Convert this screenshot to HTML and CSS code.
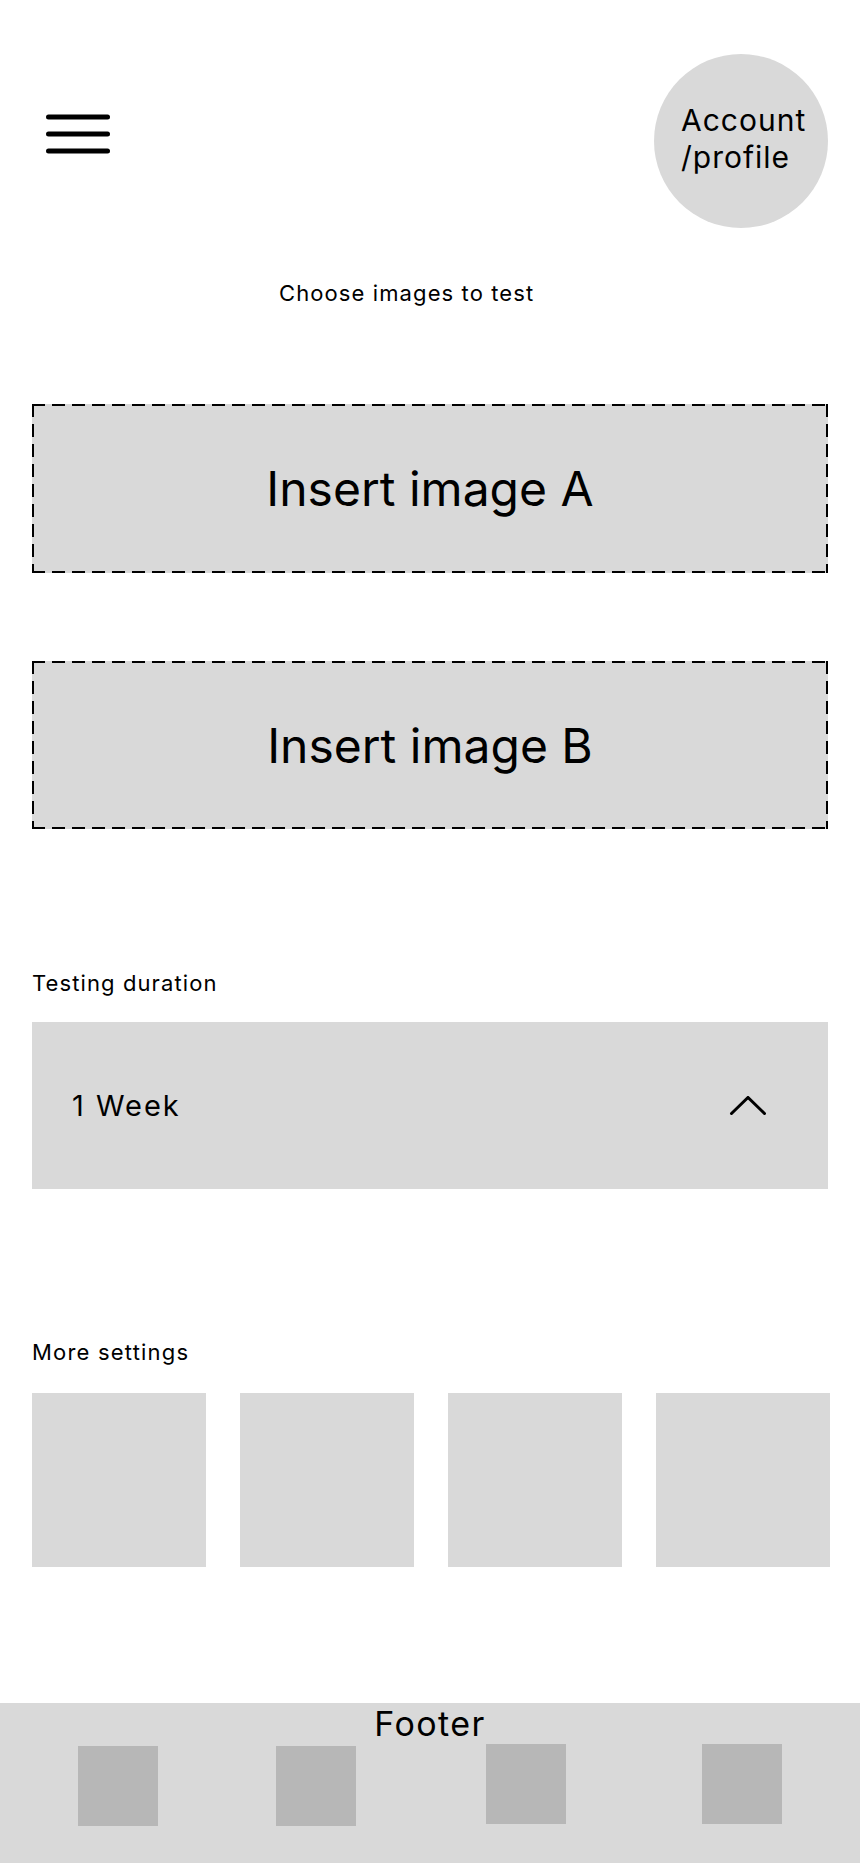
FILE: index.html
```html
<!DOCTYPE html>
<html lang="en">
<head>
    <meta charset="UTF-8">
    <meta name="viewport" content="width=device-width, initial-scale=1.0">
    <title>A/B image test</title>
    <link rel="stylesheet" href="styles.css">
</head>
<body>
    <div class="page">
        <header class="top-bar">
            <!-- menu -->
            <svg class="menu-icon" width="64" height="40" viewBox="0 0 64 40">
                <line x1="2.5" y1="3" x2="61.5" y2="3" />
                <line x1="2.5" y1="20" x2="61.5" y2="20" />
                <line x1="2.5" y1="37" x2="61.5" y2="37" />
            </svg>
            <div class="account">Account<br>/profile</div>
        </header>

        <p class="intro">Choose images to test</p>

        <div class="drop-zone">Insert image A</div>
        <div class="drop-zone second">Insert image B</div>

        <p class="label duration-label">Testing duration</p>
        <div class="select-box">
            <span>1 Week</span>
            <svg class="chevron" width="38" height="20" viewBox="0 0 38 20">
                <polyline points="2.5,17.5 19,1.5 35.5,17.5" />
            </svg>
        </div>

        <p class="label settings-label">More settings</p>
        <div class="settings">
            <div class="tile"></div>
            <div class="tile"></div>
            <div class="tile"></div>
            <div class="tile"></div>
        </div>
    </div>

    <footer class="footer">
        <div class="footer-title">Footer</div>
        <div class="footer-links">
            <div class="footer-item"></div>
            <div class="footer-item"></div>
            <div class="footer-item"></div>
            <div class="footer-item"></div>
        </div>
    </footer>
</body>
</html>
```

FILE: styles.css
```css
body {
    font-family: Inter, "Noto Sans", sans-serif;
    color: #000;
    background-color: #fff;
    margin: 0;
}
.page {
    padding: 0 32px 136px;
}
.top-bar {
    display: flex;
    justify-content: space-between;
    align-items: flex-start;
    padding-top: 54px;
}
.menu-icon {
    display: block;
    margin-top: 60px;
    margin-left: 14px;
}
.menu-icon line {
    stroke: #000;
    stroke-width: 5;
    stroke-linecap: round;
}
.account {
    width: 174px;
    height: 174px;
    box-sizing: border-box;
    border-radius: 50%;
    background-color: #d9d9d9;
    padding: 48px 0 0 27px;
    font-size: 30px;
    line-height: 37px;
    letter-spacing: 1px;
}
.intro {
    margin: 52px 0 0 247px;
    font-size: 22px;
    line-height: 27px;
    letter-spacing: 1.1px;
}
.drop-zone {
    height: 169px;
    margin-top: 97px;
    display: flex;
    align-items: center;
    justify-content: center;
    font-size: 48px;
    background:
        repeating-linear-gradient(90deg, #000 0 13px, transparent 13px 20px) top left / 100% 2px no-repeat,
        repeating-linear-gradient(90deg, #000 0 13px, transparent 13px 20px) bottom left / 100% 2px no-repeat,
        repeating-linear-gradient(180deg, #000 0 13px, transparent 13px 20px) top left / 2px 100% no-repeat,
        repeating-linear-gradient(180deg, #000 0 13px, transparent 13px 20px) top right / 2px 100% no-repeat,
        #d9d9d9;
}
.drop-zone.second {
    height: 168px;
    margin-top: 88px;
}
.label {
    font-size: 22px;
    margin: 0;
    letter-spacing: 1.1px;
}
.duration-label {
    margin-top: 141px;
}
.select-box {
    height: 167px;
    margin-top: 26px;
    background-color: #d9d9d9;
    display: flex;
    align-items: center;
    justify-content: space-between;
    padding: 0 61px 0 40px;
    font-size: 29px;
    letter-spacing: 2px;
}
.chevron polyline {
    fill: none;
    stroke: #000;
    stroke-width: 3;
    stroke-linecap: round;
    stroke-linejoin: miter;
}
.settings-label {
    margin-top: 150px;
    letter-spacing: 1.2px;
}
.settings {
    display: flex;
    gap: 34px;
    margin-top: 28px;
}
.tile {
    flex-shrink: 0;
    width: 174px;
    height: 174px;
    background-color: #d9d9d9;
}
.footer {
    height: 160px;
    background-color: #d9d9d9;
}
.footer-title {
    text-align: center;
    font-size: 34px;
    letter-spacing: 1.4px;
}
.footer-links {
    display: flex;
    align-items: flex-start;
    padding-left: 78px;
}
.footer-item {
    width: 80px;
    height: 80px;
    background-color: #b7b7b7;
}
.footer-item:nth-child(1) { margin-top: 2px; }
.footer-item:nth-child(2) { margin-top: 2px; margin-left: 118px; }
.footer-item:nth-child(3) { margin-left: 130px; }
.footer-item:nth-child(4) { margin-left: 136px; }
```
